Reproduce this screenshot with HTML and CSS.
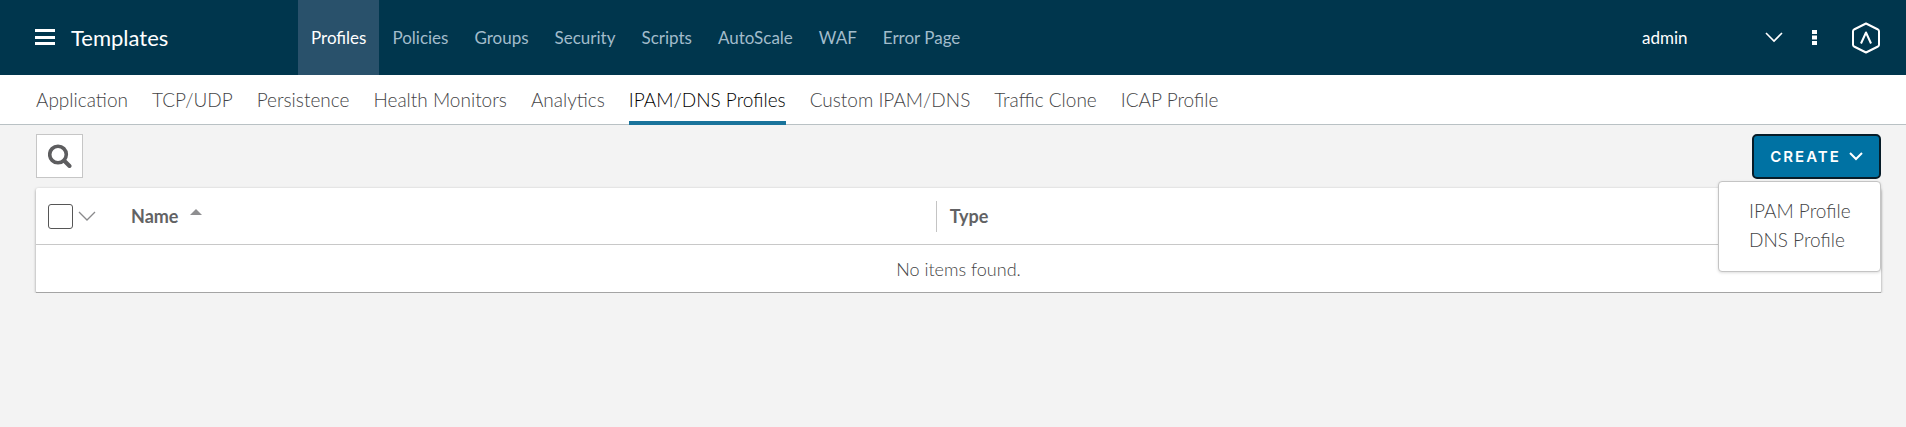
FILE: index.html
```html
<!DOCTYPE html>
<html lang="en">
<head>
<meta charset="utf-8">
<title>Templates - IPAM/DNS Profiles</title>
<link rel="stylesheet" href="styles.css">
</head>
<body>
<header class="topbar">
  <div class="brand">
    <button class="icon-button" type="button" aria-label="Menu">
      <svg width="20" height="17" viewBox="0 0 20 17" fill="#fff"><path d="M0 0h20v3H0zM0 7h20v3H0zM0 13h20v3H0z"/></svg>
    </button>
    <span class="brand-title">Templates</span>
  </div>
  <nav class="main-nav" aria-label="Templates">
    <a class="main-link active" href="#">Profiles</a>
    <a class="main-link" href="#">Policies</a>
    <a class="main-link" href="#">Groups</a>
    <a class="main-link" href="#">Security</a>
    <a class="main-link" href="#">Scripts</a>
    <a class="main-link" href="#">AutoScale</a>
    <a class="main-link" href="#">WAF</a>
    <a class="main-link" href="#">Error Page</a>
  </nav>
  <div class="account">
    <button class="tenant" type="button">
      <span>admin</span>
      <svg width="18" height="11" viewBox="0 0 18 11" fill="none" stroke="#fff" stroke-width="1.6"><path d="M1 1l8 8 8-8"/></svg>
    </button>
    <button class="icon-button" type="button" aria-label="More">
      <svg width="5" height="15" viewBox="0 0 5 15" fill="#fff"><path d="M0 0h5v4H0zM0 5.5h5v4H0zM0 11h5v4H0z"/></svg>
    </button>
    <a class="logo" href="#" aria-label="Home">
      <svg width="28" height="32" viewBox="0 0 28 32" fill="none" stroke="#fff" stroke-width="2" stroke-linejoin="round"><path d="M14 1.500l12 6q1 .6 1 1.800v13.400q0 1.200-1 1.800l-12 6-12-6q-1-.6-1-1.800V9.300q0-1.200 1-1.800z"/><path d="M9 21.500l5-11 5 11"/></svg>
    </a>
  </div>
</header>
<nav class="sub-nav" aria-label="Profiles">
  <a class="sub-link" href="#">Application</a>
  <a class="sub-link" href="#">TCP/UDP</a>
  <a class="sub-link" href="#">Persistence</a>
  <a class="sub-link" href="#">Health Monitors</a>
  <a class="sub-link" href="#">Analytics</a>
  <a class="sub-link active" href="#">IPAM/DNS Profiles</a>
  <a class="sub-link" href="#">Custom IPAM/DNS</a>
  <a class="sub-link" href="#">Traffic Clone</a>
  <a class="sub-link" href="#">ICAP Profile</a>
</nav>
<main class="content">
  <div class="toolbar">
    <button class="search" type="button" aria-label="Search">
      <svg width="24" height="24" viewBox="0 0 24 24" fill="none" stroke="#5d5d5f"><circle cx="10" cy="10.500" r="8.300" stroke-width="3.600"/><path d="M16.500 17l5 5" stroke-width="4" stroke-linecap="round"/></svg>
    </button>
    <div class="create-wrap">
      <button class="create" type="button" aria-expanded="true">
        <span>CREATE</span>
        <svg width="14" height="9" viewBox="0 0 14 9" fill="none" stroke="#fff" stroke-width="2"><path d="M1 1l6 6 6-6"/></svg>
      </button>
      <div class="menu" role="menu">
        <a class="menu-item" role="menuitem" href="#">IPAM Profile</a>
        <a class="menu-item" role="menuitem" href="#">DNS Profile</a>
      </div>
    </div>
  </div>
  <table class="grid">
    <thead>
      <tr>
        <th class="col-select">
          <div class="select-cell">
            <input class="check" type="checkbox" aria-label="Select all">
            <svg width="18" height="11" viewBox="0 0 18 11" fill="none" stroke="#8a8a8c" stroke-width="1.300"><path d="M1 1l8 8 8-8"/></svg>
          </div>
        </th>
        <th class="col-name">
          <div class="name-cell">
            <span>Name</span>
            <svg width="12" height="6" viewBox="0 0 12 6" fill="#8f8f91"><path d="M6 0l6 6H0z"/></svg>
          </div>
        </th>
        <th><div class="type-cell">Type</div></th>
      </tr>
    </thead>
    <tbody>
      <tr><td class="empty" colspan="3">No items found.</td></tr>
    </tbody>
  </table>
</main>
</body>
</html>
```
FILE: styles.css
```css
* {
  box-sizing: border-box;
}

body {
  margin: 0;
  background: #f3f3f3;
  color: #626264;
  font: 18px/24px Lato, "Open Sans", sans-serif;
}

a {
  color: inherit;
  text-decoration: none;
}

button {
  padding: 0;
  border: 0;
  background: none;
  color: inherit;
  font: inherit;
  cursor: pointer;
}

svg {
  display: block;
}

.topbar {
  display: flex;
  height: 75px;
  padding: 0 26px 0 35px;
  background: #00364d;
  color: #fff;
}

.brand {
  display: flex;
  align-items: center;
  gap: 16px;
  width: 263px;
}

.brand-title {
  font-size: 22px;
}

.main-nav {
  display: flex;
  flex: 1;
}

.main-link {
  display: flex;
  align-items: center;
  padding: 0 13px;
  color: #a2bccb;
  font-size: 17px;
}

.main-link.active {
  background: #29516b;
  color: #fff;
}

.account {
  display: flex;
  align-items: center;
  gap: 29px;
}

.tenant {
  display: flex;
  align-items: center;
  justify-content: space-between;
  width: 141px;
  font-size: 17px;
}

.logo {
  margin-left: 6px;
}

.sub-nav {
  display: flex;
  gap: 24px;
  height: 50px;
  padding: 0 36px;
  border-bottom: 1px solid #b9c1c4;
  background: #fff;
  color: #444446;
  font-size: 19px;
  font-weight: 300;
}

.sub-link {
  display: flex;
  align-items: center;
  margin-bottom: -1px;
  border-bottom: 4px solid transparent;
  border-top: 4px solid transparent;
}

.sub-link.active {
  border-bottom-color: #19739b;
  color: #000;
}

.content {
  padding: 9px 25px 0 36px;
}

.toolbar {
  display: flex;
  justify-content: space-between;
  margin-bottom: 9px;
}

.search {
  display: grid;
  place-items: center;
  width: 47px;
  height: 44px;
  border: 1px solid #c6c6c6;
  background: #fff;
}

.create-wrap {
  position: relative;
}

.create {
  display: flex;
  align-items: center;
  justify-content: center;
  gap: 8px;
  width: 129px;
  height: 45px;
  border: 2px solid #071c28;
  border-radius: 5px;
  background: #0072a3;
  color: #fff;
  font: 600 15px/20px Inter, sans-serif;
  letter-spacing: 2px;
}

.menu {
  position: absolute;
  top: 47px;
  right: 0;
  display: flex;
  flex-direction: column;
  width: 163px;
  padding: 14px 0 17px 30px;
  border: 1px solid #c4c4c4;
  border-radius: 4px;
  background: #fff;
  box-shadow: 0 1px 3px #0002;
  color: #444446;
  font-size: 19px;
  font-weight: 300;
}

.menu-item {
  line-height: 29px;
  white-space: nowrap;
}

.grid {
  width: 100%;
  border-collapse: separate;
  border-spacing: 0;
  table-layout: fixed;
  border-radius: 2px;
  background: #fff;
  box-shadow: 0 1px 3px #0006;
}

.grid th {
  height: 57px;
  padding: 0;
  border-bottom: 1px solid #c8c8c8;
  text-align: left;
}

.grid .col-select {
  width: 88px;
}

.grid .col-name {
  width: 44%;
  padding-left: 7px;
}

.select-cell {
  display: flex;
  align-items: center;
  gap: 5px;
  padding-left: 12px;
}

.check {
  appearance: none;
  width: 25px;
  height: 25px;
  margin: 0;
  border: 1px solid #565656;
  border-radius: 3px;
  background: #fff;
}

.name-cell {
  display: flex;
  gap: 12px;
}

.name-cell svg {
  margin-top: 5px;
}

.type-cell {
  padding: 3px 0 4px 13px;
  border-left: 1px solid #c4c4c4;
}

.grid .empty {
  height: 48px;
  padding: 0;
  border-bottom: 1px solid #a4a4a4;
  color: #444446;
  text-align: center;
  font-weight: 300;
}
```
